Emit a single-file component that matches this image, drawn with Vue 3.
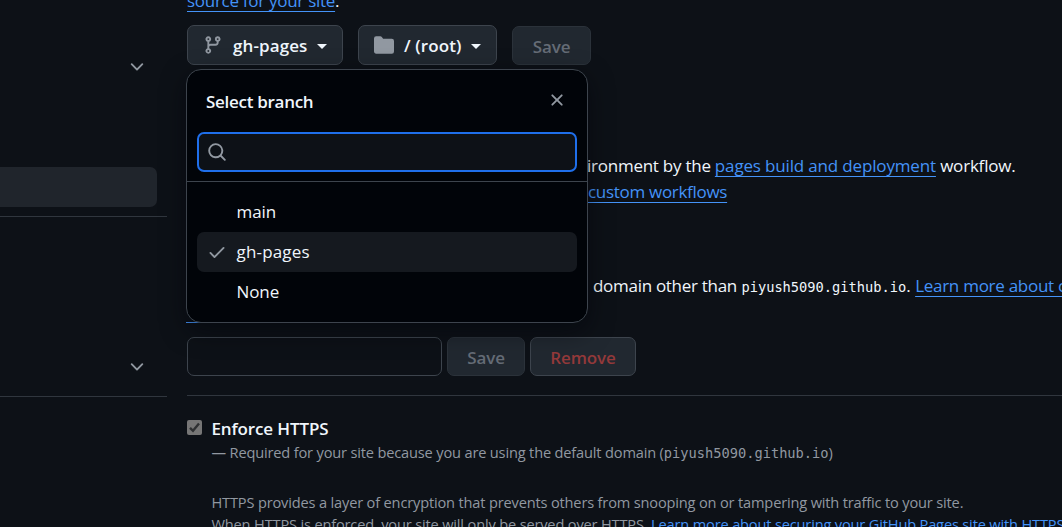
<script setup>
import { ref } from 'vue'

const branches = ['main', 'gh-pages', 'None']
const selected = ref('gh-pages')
const chevron = 'M12.78 5.22a.749.749 0 0 1 0 1.06l-4.25 4.25a.749.749 0 0 1-1.06 0L3.22 6.28a.749.749 0 1 1 1.06-1.06L8 8.939l3.72-3.719a.749.749 0 0 1 1.06 0Z'
</script>

<template>
  <div class="page">
    <aside class="sidebar">
      <section class="group group-first">
        <svg class="icon chevron" viewBox="0 0 16 16"><path :d="chevron" /></svg>
        <div class="current"></div>
      </section>
      <section class="group group-second">
        <svg class="icon chevron" viewBox="0 0 16 16"><path :d="chevron" /></svg>
      </section>
    </aside>

    <main class="content">
      <p class="line intro"><a class="t-source">source for your site</a>.</p>

      <div class="toolbar">
        <button class="btn picker branch">
          <svg class="icon" viewBox="0 0 16 16"><path d="M9.5 3.25a2.25 2.25 0 1 1 3 2.122V6A2.5 2.5 0 0 1 10 8.5H6a1 1 0 0 0-1 1v1.128a2.251 2.251 0 1 1-1.5 0V5.372a2.25 2.25 0 1 1 1.5 0v1.836A2.493 2.493 0 0 1 6 7h4a1 1 0 0 0 1-1v-.628A2.25 2.25 0 0 1 9.5 3.25Zm-6 0a.75.75 0 1 0 1.5 0 .75.75 0 0 0-1.5 0Zm8.25-.75a.75.75 0 1 0 0 1.5.75.75 0 0 0 0-1.5ZM4.25 12a.75.75 0 1 0 0 1.5.75.75 0 0 0 0-1.5Z" /></svg>
          <span class="t-strong">{{ selected }}</span>
          <i class="caret"></i>
        </button>
        <button class="btn picker folder">
          <svg class="icon" viewBox="0 0 16 16"><path d="M1.75 1A1.75 1.75 0 0 0 0 2.75v10.5C0 14.216.784 15 1.75 15h12.5A1.75 1.75 0 0 0 16 13.25v-8.5A1.75 1.75 0 0 0 14.25 3H7.5a.25.25 0 0 1-.2-.1l-.9-1.2C6.07 1.26 5.55 1 5 1H1.75Z" /></svg>
          <span class="t-strong">/ (root)</span>
          <i class="caret"></i>
        </button>
        <button class="btn plain disabled save-source">Save</button>
      </div>

      <div class="beside deploy">
        <p class="line t-body">ironment by the <a class="t-pages">pages build and deployment</a><span class="t-workflow"> workflow.</span></p>
        <p class="line row-custom"><a class="t-custom">custom workflows</a></p>
      </div>

      <div class="beside domain">
        <p class="line"><span class="t-domain">domain other than</span> <code>piyush5090.github.io</code>. <a class="t-learn">Learn more about configuring</a></p>
      </div>
      <div class="wrapped-link"></div>

      <div class="domain-form">
        <input class="field" type="text" />
        <button class="btn plain disabled save-domain">Save</button>
        <button class="btn plain danger">Remove</button>
      </div>

      <section class="https">
        <span class="checkbox">
          <svg viewBox="0 0 15 15"><path d="M3 7.8 6 10.8 12 3.6" /></svg>
        </span>
        <div class="https-text">
          <h4 class="line">Enforce HTTPS</h4>
          <p class="small">— Required for your site because you are using the default domain (<code>piyush5090.github.io</code>)</p>
          <p class="small note">HTTPS provides a layer of encryption that prevents others from snooping on or tampering with traffic to your site.<br />When HTTPS is enforced, your site will only be served over HTTPS. <a>Learn more about securing your GitHub Pages site with HTTPS</a></p>
        </div>
      </section>
    </main>

    <div class="popover">
      <header class="pop-head">
        <strong>Select branch</strong>
        <svg class="icon" viewBox="0 0 16 16"><path d="M3.72 3.72a.75.75 0 0 1 1.06 0L8 6.94l3.22-3.22a.749.749 0 0 1 1.275.326.749.749 0 0 1-.215.734L9.06 8l3.22 3.22a.749.749 0 0 1-.326 1.275.749.749 0 0 1-.734-.215L8 9.06l-3.22 3.22a.751.751 0 0 1-1.042-.018.751.751 0 0 1-.018-1.042L6.94 8 3.72 4.78a.75.75 0 0 1 0-1.06Z" /></svg>
      </header>
      <div class="search-wrap">
        <div class="search">
          <svg class="icon" viewBox="0 0 16 16"><path d="M10.68 11.74a6 6 0 0 1-7.922-8.982 6 6 0 0 1 8.982 7.922l3.04 3.04a.749.749 0 0 1-.326 1.275.749.749 0 0 1-.734-.215ZM11.5 7a4.499 4.499 0 1 0-8.997 0A4.499 4.499 0 0 0 11.5 7Z" /></svg>
        </div>
      </div>
      <ul class="list">
        <li v-for="name in branches" :key="name" :class="{ active: name === selected }" @click="selected = name">
          <span class="mark">
            <svg v-if="name === selected" class="icon" viewBox="0 0 16 16"><path d="M13.78 4.22a.75.75 0 0 1 0 1.06l-7.25 7.25a.75.75 0 0 1-1.06 0L2.22 9.28a.751.751 0 0 1 .018-1.042.751.751 0 0 1 1.042-.018L6 10.94l6.72-6.72a.75.75 0 0 1 1.06 0Z" /></svg>
          </span>
          {{ name }}
        </li>
      </ul>
    </div>
  </div>
</template>

<style>
body { background: #0d1117; }
</style>

<style scoped>
* { box-sizing: border-box; }
.page {
  position: relative;
  display: flex;
  height: 527px;
  overflow: hidden;
  background: #0d1117;
  color: #f0f6fc;
  font: 17px/26px "Open Sans", "Noto Sans", sans-serif;
}
p, h4, ul { margin: 0; padding: 0; }
a {
  color: #4493f8;
  text-decoration: underline;
  text-decoration-thickness: 1px;
  text-underline-offset: 4px;
}
code { font: 13.7px/1 "DejaVu Sans Mono", monospace; }
.icon { width: 20px; height: 20px; flex: none; fill: #9198a1; }

.sidebar { width: 167px; flex: none; }
.group {
  display: flex;
  flex-direction: column;
  align-items: flex-end;
  border-bottom: 1px solid #30363e;
}
.group-first { height: 217px; padding-top: 57px; }
.group-second { height: 180px; padding-top: 140px; }
.chevron { margin-right: 20px; }
.current {
  width: 157px;
  height: 40px;
  margin: 90px 10px 0 0;
  border-radius: 0 7px 7px 0;
  background: #20252c;
}

.content { width: 875px; flex: none; margin-left: 20px; }
.line { height: 26px; white-space: nowrap; }
.intro { margin-top: -12px; }
.t-source { letter-spacing: -0.28px; }

.toolbar { display: flex; align-items: flex-end; height: 40px; margin-top: 11px; }
.btn {
  display: flex;
  align-items: center;
  justify-content: center;
  height: 39px;
  margin: 0;
  padding: 0;
  border: 1px solid #3d444d;
  border-radius: 7px;
  background: #212830;
  color: #f0f6fc;
  font: 600 17px/26px "Open Sans", "Noto Sans", sans-serif;
}
.plain { padding-top: 2px; font-weight: 550; letter-spacing: -0.1px; }
.picker { height: 40px; justify-content: flex-start; padding: 0 15px; }
.picker .t-strong { padding-top: 2px; margin-left: 10px; letter-spacing: 0.1px; white-space: nowrap; }
.branch { width: 156px; margin-right: 15px; }
.folder { width: 139px; margin-right: 15px; }
.caret {
  margin: 2px 0 0 auto;
  border: 5px solid transparent;
  border-top-color: #f0f6fc;
  border-bottom: 0;
}
.disabled { border-color: #2b323a; color: #656c76; }
.save-source { width: 79px; }
.save-domain { width: 78px; margin: 0 5px; }
.danger { width: 106px; color: #94393a; }

.beside { padding-left: 400px; }
.deploy { margin-top: 88px; }
.domain { margin-top: 68px; padding-left: 406px; }
.t-body { letter-spacing: -0.25px; }
.t-pages { letter-spacing: -0.16px; }
.t-workflow { letter-spacing: -0.2px; }
.row-custom { padding-left: 1px; }
.t-custom { letter-spacing: -0.3px; }
.t-domain { letter-spacing: -0.29px; }
.t-learn { letter-spacing: -0.27px; }
.wrapped-link { width: 60px; height: 24px; margin-left: -1px; border-bottom: 1px solid #4493f8; }

.domain-form { display: flex; margin-top: 14px; }
.field {
  width: 255px;
  height: 39px;
  border: 1px solid #3d444d;
  border-radius: 7px;
  background: #0d1117;
  outline: 0;
}

.https { display: flex; margin-top: 19px; padding-top: 20px; border-top: 1px solid #30363e; }
.checkbox { width: 15px; height: 15px; flex: none; margin: 4px 9.5px 0 0; border-radius: 2px; background: #767676; }
.checkbox svg { display: block; width: 15px; height: 15px; fill: none; stroke: #2f3133; stroke-width: 2.4; }
.https-text { white-space: nowrap; }
h4 { font-size: 17px; font-weight: 600; letter-spacing: -0.12px; }
.small { margin-top: -1px; color: #9198a1; font-size: 14.6px; line-height: 22px; letter-spacing: -0.165px; }
.small code { letter-spacing: 0; }
.small.note { margin-top: 28px; }

.popover {
  position: absolute;
  left: 186px;
  top: 69px;
  width: 402px;
  height: 254px;
  border: 1px solid #3d444d;
  border-radius: 15px;
  background: #010409;
  box-shadow: 0 8px 24px rgba(1, 4, 9, 0.5);
}
.pop-head { display: flex; justify-content: space-between; height: 62px; padding: 19px 20px 0 19px; }
.pop-head strong { font-weight: 600; letter-spacing: -0.29px; }
.pop-head .icon { margin-top: 1px; }
.search-wrap { height: 50px; padding: 0 10px; border-bottom: 1px solid #3d444d; }
.search {
  display: flex;
  align-items: center;
  height: 40px;
  padding-left: 8px;
  border: 2px solid #1f6feb;
  border-radius: 7px;
  background: #0d1117;
}
.list { padding: 10px; list-style: none; }
.list li { display: flex; align-items: center; height: 40px; padding-left: 10px; border-radius: 7px; letter-spacing: -0.1px; }
.list .active { background: #15191f; letter-spacing: 0.17px; }
.mark { display: flex; width: 29.5px; flex: none; }
</style>
